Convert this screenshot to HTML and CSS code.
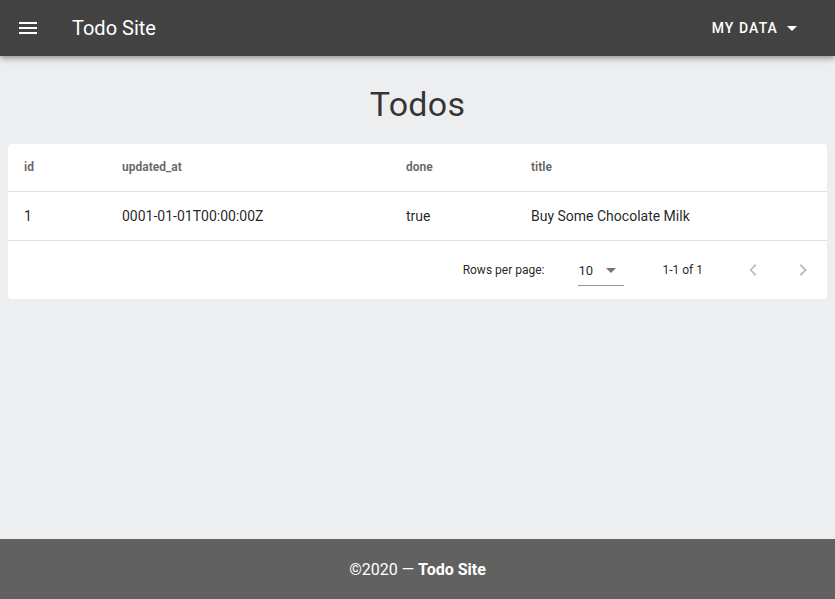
FILE: index.html
```html
<!DOCTYPE html>
<html lang="en">
<head>
<meta charset="utf-8">
<title>Todo Site</title>
<link rel="stylesheet" href="styles.css">
</head>
<body>
<header class="app-bar">
  <div class="bar-left">
    <svg class="icon" viewBox="0 0 24 24" width="24" height="24"><path fill="#fff" d="M3,6H21V8H3V6M3,11H21V13H3V11M3,16H21V18H3V16Z"/></svg>
    <span class="bar-title">Todo Site</span>
  </div>
  <div class="bar-right">
    <span class="menu-btn">My Data</span>
    <svg class="icon" viewBox="0 0 24 24" width="24" height="24"><path fill="#fff" d="M7,10L12,15L17,10H7Z"/></svg>
  </div>
</header>
<main class="main">
  <h1 class="page-title">Todos</h1>
  <section class="card">
    <table class="data-table">
      <thead>
        <tr>
          <th class="col-id">id</th>
          <th class="col-upd">updated_at</th>
          <th class="col-done">done</th>
          <th class="col-title">title</th>
        </tr>
      </thead>
      <tbody>
        <tr>
          <td>1</td>
          <td>0001-01-01T00:00:00Z</td>
          <td>true</td>
          <td>Buy Some Chocolate Milk</td>
        </tr>
      </tbody>
    </table>
    <div class="table-footer">
      <span class="rpp">Rows per page:</span>
      <div class="select">
        <span>10</span>
        <svg viewBox="0 0 24 24" width="24" height="24"><path fill="rgba(0,0,0,0.54)" d="M7,10L12,15L17,10H7Z"/></svg>
      </div>
      <span class="range">1-1 of 1</span>
      <div class="pager">
        <svg viewBox="0 0 24 24" width="24" height="24"><path fill="rgba(0,0,0,0.26)" d="M15.41,16.58L10.83,12L15.41,7.41L14,6L8.59,12L14,18L15.41,16.58Z"/></svg>
        <svg viewBox="0 0 24 24" width="24" height="24"><path fill="rgba(0,0,0,0.26)" d="M8.59,16.58L13.17,12L8.59,7.41L10,6L16,12L10,18L8.59,16.58Z"/></svg>
      </div>
    </div>
  </section>
</main>
<footer class="site-footer">
  <span>©2020 — <strong>Todo Site</strong></span>
</footer>
</body>
</html>
```
FILE: styles.css
```css
* { box-sizing: border-box; }
html, body { margin: 0; padding: 0; }
body {
  font-family: Roboto, "Liberation Sans", sans-serif;
  background: #edeef0;
  min-height: 100vh;
  display: flex;
  flex-direction: column;
  color: rgba(0,0,0,0.87);
}
.app-bar {
  height: 56px;
  background: #424242;
  color: #fff;
  display: flex;
  align-items: center;
  justify-content: space-between;
  padding: 0 31px 0 16px;
  box-shadow: 0 2px 4px -1px rgba(0,0,0,.2), 0 4px 5px 0 rgba(0,0,0,.14), 0 1px 10px 0 rgba(0,0,0,.12);
  position: relative;
  z-index: 2;
}
.icon { display: block; }
.bar-left { display: flex; align-items: center; gap: 32px; }
.bar-title { font-size: 20px; font-weight: 400; letter-spacing: 0; }
.bar-right { display: flex; align-items: center; gap: 2px; }
.menu-btn {
  text-transform: uppercase;
  font-size: 14px;
  font-weight: 500;
  letter-spacing: 1.1px;
}
.main {
  flex: 1;
  padding: 28px 8px 0 8px;
}
.page-title {
  margin: 0 0 20px 0;
  text-align: center;
  font-size: 34px;
  line-height: 40px;
  font-weight: 400;
  color: rgba(0,0,0,0.78);
  letter-spacing: 0.25px;
}
.card {
  background: #fff;
  border-radius: 4px;
  overflow: hidden;
}
.data-table {
  width: 100%;
  border-collapse: collapse;
  table-layout: fixed;
}
.data-table th, .data-table td {
  text-align: left;
  padding: 0 16px;
  border-bottom: 1px solid rgba(0,0,0,0.12);
}
.data-table th {
  height: 47px;
  font-size: 12px;
  font-weight: 700;
  color: rgba(0,0,0,0.6);
}
.data-table td {
  height: 49px;
  font-size: 14px;
  color: rgba(0,0,0,0.87);
}
.col-id { width: 98px; }
.col-upd { width: 284px; }
.col-done { width: 125px; }
.table-footer {
  height: 58px;
  display: flex;
  align-items: center;
  justify-content: flex-end;
  font-size: 12px;
  color: rgba(0,0,0,0.87);
  padding-right: 12px;
}
.rpp { margin-right: 34px; }
.select {
  width: 46px;
  height: 30px;
  display: flex;
  align-items: center;
  justify-content: space-between;
  border-bottom: 1px solid rgba(0,0,0,0.42);
  margin-top: 2px;
  font-size: 13px;
}
.select span { padding-top: 1px; }
.select svg { display: block; margin-right: 1px; }
.range { margin-left: 38px; margin-right: 38px; }
.pager { display: flex; align-items: center; gap: 26px; }
.pager svg { display: block; }
.site-footer {
  height: 60px;
  background: #616161;
  color: #fff;
  display: flex;
  align-items: center;
  justify-content: center;
  font-size: 16px;
}
.site-footer strong { font-weight: 700; }
```
